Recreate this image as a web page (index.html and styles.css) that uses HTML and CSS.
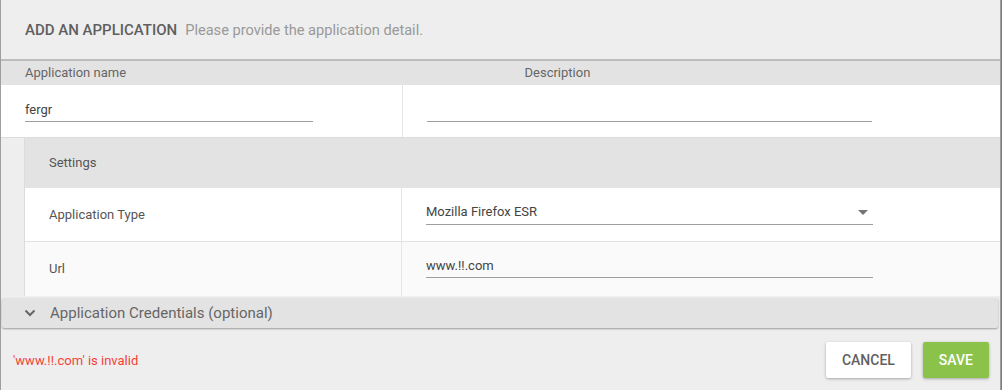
FILE: index.html
```html
<!DOCTYPE html>
<html lang="en">
<head>
    <meta charset="UTF-8" />
    <meta name="viewport" content="width=device-width, initial-scale=1" />
    <title>Add an Application</title>
    <link rel="stylesheet" href="styles.css">
</head>
<body>
<div class="dialog">
    <div class="dialog-head">
        <span class="title">ADD AN APPLICATION</span>
        <span class="subtitle">Please provide the application detail.</span>
    </div>

    <div class="label-row">
        <div class="label-cell">Application name</div>
        <div class="label-cell">Description</div>
    </div>

    <div class="field-row">
        <div class="field-cell first">
            <input type="text" class="line-input name-input" value="fergr" />
        </div>
        <div class="field-cell">
            <input type="text" class="line-input desc-input" value="" />
        </div>
    </div>

    <div class="settings">
        <div class="settings-head">Settings</div>
        <div class="settings-row">
            <div class="settings-label">Application Type</div>
            <div class="settings-value">
                <div class="line-input select-box">
                    <span>Mozilla Firefox ESR</span>
                    <span class="caret"></span>
                </div>
            </div>
        </div>
        <div class="settings-row alt">
            <div class="settings-label">Url</div>
            <div class="settings-value">
                <input type="text" class="line-input wide-input" value="www.!!.com" />
            </div>
        </div>
    </div>

    <div class="credentials">
        <svg class="chevron" width="12" height="8" viewBox="0 0 12 8">
            <path d="M1.5 1.5 L6 6 L10.5 1.5" fill="none" stroke="#666" stroke-width="2" />
        </svg>
        <span>Application Credentials (optional)</span>
    </div>

    <div class="dialog-foot">
        <span class="error">'www.!!.com' is invalid</span>
        <div class="actions">
            <button type="button" class="btn btn-cancel">CANCEL</button>
            <button type="button" class="btn btn-save">SAVE</button>
        </div>
    </div>
</div>
</body>
</html>
```

FILE: styles.css
```css
body {
    margin: 0;
    background-color: #7d7d7d;
    font-family: Roboto, "Liberation Sans", Arial, sans-serif;
}
.dialog {
    width: 1001px;
    height: 390px;
    box-sizing: border-box;
    background-color: #eeeeee;
    border-left: 1px solid #9e9e9e;
    border-right: 1px solid #9e9e9e;
}
.dialog-head {
    height: 59px;
    line-height: 59px;
    padding-left: 24px;
    border-bottom: 2px solid #bdbdbd;
}
.title {
    font-size: 15px;
    font-weight: 500;
    color: #5f5f5f;
    margin-right: 4px;
}
.subtitle {
    font-size: 14.6px;
    color: #999;
}
.label-row {
    display: flex;
    height: 24px;
    line-height: 24px;
    background-color: #e3e3e3;
    font-size: 13px;
    color: #666;
}
.label-cell {
    width: 500px;
    box-sizing: border-box;
    padding-left: 24px;
}
.field-row {
    display: flex;
    height: 52px;
    background-color: white;
    border-bottom: 1px solid #dcdcdc;
}
.field-cell {
    padding: 14px 24px 0;
}
.field-cell.first {
    width: 402px;
    box-sizing: border-box;
    border-right: 1px solid #e6e6e6;
}
.line-input {
    display: block;
    box-sizing: border-box;
    height: 23px;
    padding: 0 0 2px;
    line-height: 20px;
    border: none;
    border-bottom: 1px solid #9e9e9e;
    background: transparent;
    font-family: inherit;
    font-size: 13px;
    color: #444;
    outline: none;
}
.name-input {
    width: 288px;
}
.desc-input {
    width: 445px;
}
.wide-input {
    width: 447px;
}
.settings {
    margin-left: 23px;
    border-left: 1px solid #dcdcdc;
}
.settings-head {
    height: 50px;
    line-height: 50px;
    padding-left: 24px;
    background-color: #e3e3e3;
    font-size: 13px;
    color: #555;
}
.settings-row {
    display: flex;
    height: 53px;
    background-color: white;
    border-bottom: 1px solid #e3e3e3;
}
.settings-row.alt {
    height: 54px;
    background-color: #fafafa;
    border-bottom: none;
}
.settings-label {
    width: 377px;
    box-sizing: border-box;
    padding-left: 24px;
    border-right: 1px solid #e6e6e6;
    line-height: 53px;
    font-size: 13px;
    color: #555;
}
.alt .settings-label {
    line-height: 54px;
}
.settings-value {
    padding: 14px 24px 0;
}
.alt .settings-value {
    padding-top: 13px;
}
.select-box {
    width: 447px;
    display: flex;
    justify-content: space-between;
    align-items: center;
    padding-right: 5px;
}
.caret {
    width: 0;
    height: 0;
    border-left: 5px solid transparent;
    border-right: 5px solid transparent;
    border-top: 5px solid #757575;
}
.credentials {
    display: flex;
    align-items: center;
    height: 30px;
    margin: 2px 2px 0 1px;
    padding-left: 22px;
    background-color: #e3e3e3;
    border-radius: 2px;
    box-shadow: 0 1px 2px rgba(0,0,0,0.35);
    font-size: 15px;
    color: #666;
}
.chevron {
    margin-right: 14px;
}
.dialog-foot {
    display: flex;
    justify-content: space-between;
    align-items: center;
    padding: 14px 11px 0 12px;
}
.error {
    font-size: 13px;
    color: #f44336;
}
.actions {
    display: flex;
    gap: 12px;
}
.btn {
    height: 36px;
    padding: 0 16px;
    border: none;
    border-radius: 2px;
    font-family: inherit;
    font-size: 14px;
    font-weight: 500;
    cursor: pointer;
    box-shadow: 0 1px 3px rgba(0,0,0,0.3);
}
.btn-cancel {
    background-color: white;
    color: #616161;
}
.btn-save {
    background-color: #8bc34a;
    color: white;
}
```
